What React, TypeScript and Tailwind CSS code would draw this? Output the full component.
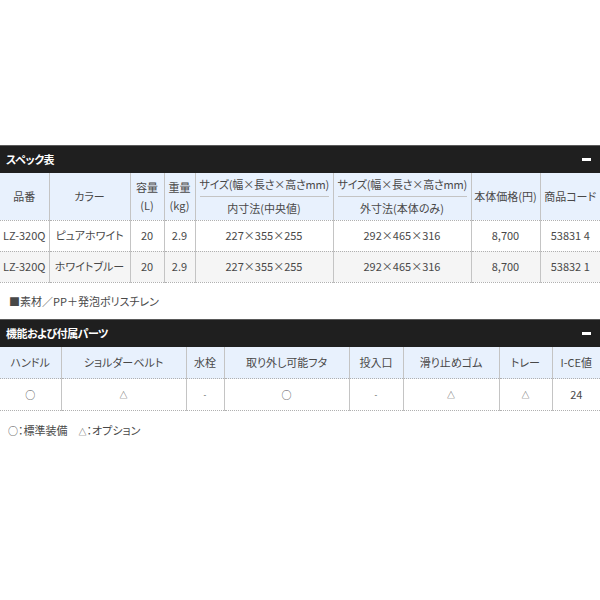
import React from "react";

const font = {
  fontFamily: '"Noto Sans CJK JP", "Noto Sans", sans-serif',
};

function Bar({ title }: { title: string }) {
  return (
    <div className="flex h-[28px] items-center justify-between border-t border-[#5a5a5a] bg-[#1f1f1f] pl-[6px] pr-[9px]">
      <span className="text-[11px] font-bold tracking-[-0.5px] text-white">{title}</span>
      <div className="h-[3px] w-[9px] bg-white" />
    </div>
  );
}

const th =
  "whitespace-nowrap border-r border-[#c4c4c4] border-b border-b-[#b0b0b0] [border-bottom-style:dotted] bg-[#e8f1fd] text-center font-normal p-0 align-middle";
const td =
  "whitespace-nowrap border-r border-[#c4c4c4] border-b border-b-[#b0b0b0] [border-bottom-style:dotted] text-center p-0 align-middle";

function SizeHead({ sub }: { sub: string }) {
  return (
    <div className="flex flex-col items-stretch px-[4px]">
      <div className="border-b border-[#c4c4c4] pb-[2px] leading-[20px] tracking-[-0.2px]">サイズ(幅×長さ×高さmm)</div>
      <div className="pt-[1px] leading-[20px]">{sub}</div>
    </div>
  );
}

export default function App() {
  const rows = [
    ["LZ-320Q", "ピュアホワイト", "20", "2.9", "227×355×255", "292×465×316", "8,700", "53831 4"],
    ["LZ-320Q", "ホワイトブルー", "20", "2.9", "227×355×255", "292×465×316", "8,700", "53832 1"],
  ];
  return (
    <div
      className="w-[600px] bg-white text-[11px] text-[#484848] [font-feature-settings:'palt']"
      style={font}
    >
      <div className="h-[145px]" />
      <Bar title="スペック表" />
      <table className="w-[600px] table-fixed border-collapse">
        <colgroup>
          <col className="w-[49px]" />
          <col className="w-[81px]" />
          <col className="w-[34px]" />
          <col className="w-[31px]" />
          <col className="w-[138px]" />
          <col className="w-[138px]" />
          <col className="w-[69px]" />
          <col className="w-[60px]" />
        </colgroup>
        <thead>
          <tr className="h-[47px]">
            <th className={th}>品番</th>
            <th className={th}>カラー</th>
            <th className={th}>
              <div className="leading-[18px]">容量</div>
              <div className="leading-[18px]">(L)</div>
            </th>
            <th className={th}>
              <div className="leading-[18px]">重量</div>
              <div className="leading-[18px]">(kg)</div>
            </th>
            <th className={th}>
              <SizeHead sub="内寸法(中央値)" />
            </th>
            <th className={th}>
              <SizeHead sub="外寸法(本体のみ)" />
            </th>
            <th className={th}>本体価格(円)</th>
            <th className={th + " border-r-0"}>商品コード</th>
          </tr>
        </thead>
        <tbody>
          {rows.map((r, i) => (
            <tr key={i} className={"h-[31px] " + (i === 1 ? "bg-[#f5f5f5]" : "bg-white")}>
              {r.map((c, j) => (
                <td key={j} className={td + (j === 7 ? " border-r-0" : "")}>
                  {c}
                </td>
              ))}
            </tr>
          ))}
        </tbody>
      </table>
      <div className="h-[36px] pl-[9px] pt-[9px] leading-[18px]">■素材／PP＋発泡ポリスチレン</div>
      <Bar title="機能および付属パーツ" />
      <table className="w-[600px] table-fixed border-collapse">
        <colgroup>
          <col className="w-[61px]" />
          <col className="w-[125px]" />
          <col className="w-[38px]" />
          <col className="w-[125px]" />
          <col className="w-[54px]" />
          <col className="w-[96px]" />
          <col className="w-[53px]" />
          <col className="w-[48px]" />
        </colgroup>
        <thead>
          <tr className="h-[32px]">
            {["ハンドル", "ショルダーベルト", "水栓", "取り外し可能フタ", "投入口", "滑り止めゴム", "トレー", "I-CE値"].map(
              (h, j) => (
                <th key={j} className={th + (j === 7 ? " border-r-0" : "")}>
                  {h}
                </th>
              )
            )}
          </tr>
        </thead>
        <tbody>
          <tr className="h-[32px]">
            {["○", "△", "-", "○", "-", "△", "△", "24"].map((c, j) => (
              <td
                key={j}
                className={td + (j === 7 ? " border-r-0" : "") + (c === "24" ? "" : c === "○" ? " text-[10px]" : " text-[8px]")}
              >
                {c}
              </td>
            ))}
          </tr>
        </tbody>
      </table>
      <div className="pl-[8px] pt-[10px] leading-[18px]">
        <span className="text-[10px]">○</span>：標準装備　<span className="text-[8px]">△</span>：オプション
      </div>
    </div>
  );
}
